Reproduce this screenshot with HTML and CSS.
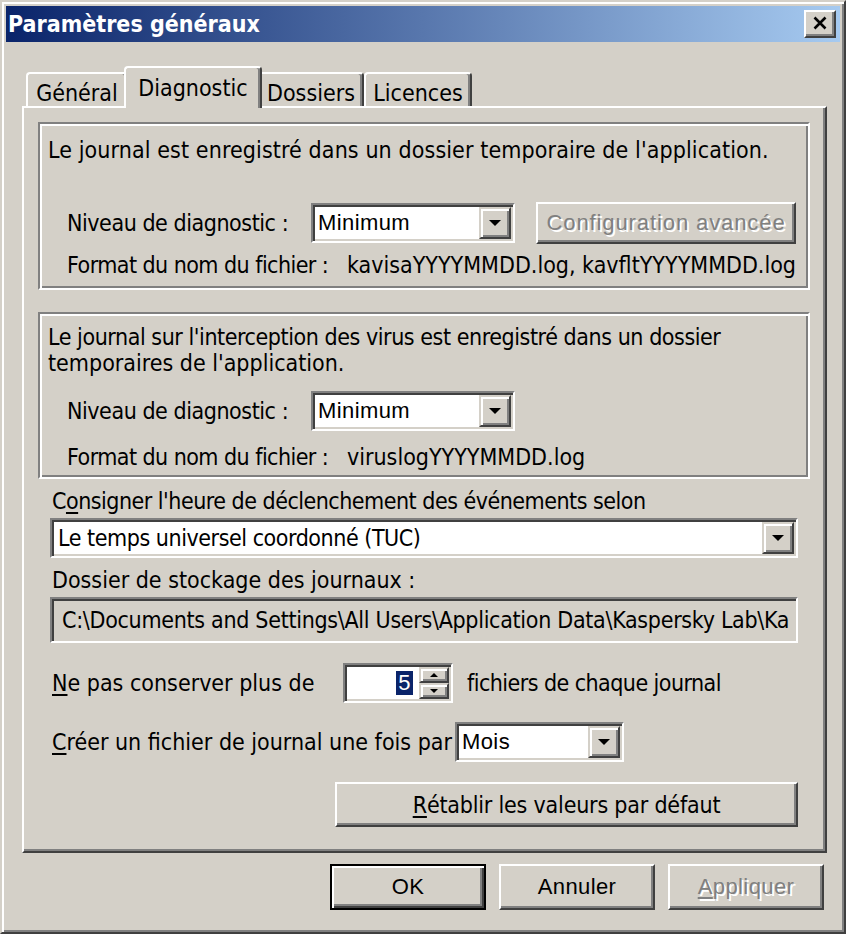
FILE: index.html
```html
<!DOCTYPE html>
<html lang="fr">
<head>
<meta charset="utf-8">
<title>Paramètres généraux</title>
<link rel="stylesheet" href="styles.css">
</head>
<body>
<div class="window">
  <div class="titlebar">
    <span class="title">Paramètres généraux</span>
    <div class="close">
      <svg width="16" height="14" viewBox="0 0 16 14"><path d="M2.5 1.5 L13.5 12.5 M13.5 1.5 L2.5 12.5" stroke="#000" stroke-width="2.6" fill="none"/></svg>
    </div>
  </div>
  <div class="client">
    <div class="tabs">
      <div class="tab t1">Général</div>
      <div class="tab t2 active">Diagnostic</div>
      <div class="tab t3">Dossiers</div>
      <div class="tab t4">Licences</div>
    </div>
    <div class="panel">
      <div class="group g1">
        <div class="line l-first">Le journal est enregistré dans un dossier temporaire de l'application.</div>
        <div class="row lvl1">
          <span class="lbl lbl-level">Niveau de diagnostic :</span>
          <div class="combo combo-level"><span class="combo-text ms">Minimum</span><span class="drop"><i class="tri"></i></span></div>
          <div class="btn btn-adv disabled ms">Configuration avancée</div>
        </div>
        <div class="row fmt1">
          <span class="lbl lbl-format">Format du nom du fichier :</span><span>kavisaYYYYMMDD.log, kavfltYYYYMMDD.log</span>
        </div>
      </div>
      <div class="group g2">
        <div class="line l-virus">Le journal sur l'interception des virus est enregistré dans un dossier</div>
        <div class="line">temporaires de l'application.</div>
        <div class="row lvl2">
          <span class="lbl lbl-level">Niveau de diagnostic :</span>
          <div class="combo combo-level"><span class="combo-text ms">Minimum</span><span class="drop"><i class="tri"></i></span></div>
        </div>
        <div class="row fmt2">
          <span class="lbl lbl-format">Format du nom du fichier :</span><span>viruslogYYYYMMDD.log</span>
        </div>
      </div>
      <div class="section">
        <div class="line l-consigner">C<u>o</u>nsigner l'heure de déclenchement des événements selon</div>
        <div class="combo combo-wide"><span class="combo-text">Le temps universel coordonné (TUC)</span><span class="drop"><i class="tri"></i></span></div>
        <div class="line l-dossier">Dossier de stockage des journaux :</div>
        <div class="edit-path">C:\Documents and Settings\All Users\Application Data\Kaspersky Lab\Ka</div>
        <div class="row r-keep">
          <span class="lbl lbl-keep"><u>N</u>e pas conserver plus de</span>
          <div class="spin">
            <span class="spin-val ms"><span class="sel">5</span></span>
            <span class="spin-btns">
              <span class="sbtn"><i class="tri-up"></i></span>
              <span class="sbtn"><i class="tri-sm"></i></span>
            </span>
          </div>
          <span class="after-spin">fichiers de chaque journal</span>
        </div>
        <div class="row r-create">
          <span class="lbl lbl-create"><u>C</u>réer un fichier de journal une fois par</span>
          <div class="combo combo-mois"><span class="combo-text ms">Mois</span><span class="drop"><i class="tri"></i></span></div>
        </div>
        <div class="btn btn-reset"><u>R</u>établir les valeurs par défaut</div>
      </div>
    </div>
    <div class="buttons">
      <div class="btn dlg default ms">OK</div>
      <div class="btn dlg ms">Annuler</div>
      <div class="btn dlg disabled ms"><u>A</u>ppliquer</div>
    </div>
  </div>
</div>
</body>
</html>
```
FILE: styles.css
```css
* { box-sizing: border-box; }

body {
  margin: 0;
  background: #D4D0C8;
  font-family: "DejaVu Sans Condensed", "DejaVu Sans", sans-serif;
  font-size: 23px;
  color: #000;
}

.ms {
  font-family: "Liberation Sans", Arial, sans-serif;
  font-size: 22px;
  letter-spacing: 0.4px;
}

u { text-decoration-thickness: 2px; text-underline-offset: 3px; }

.window {
  width: 846px;
  height: 934px;
  border: 2px solid;
  border-color: #D4D0C8 #404040 #404040 #D4D0C8;
  box-shadow: inset 2px 2px #fff, inset -2px -2px #808080;
  padding: 4px;
  display: flex;
  flex-direction: column;
}

.titlebar {
  height: 36px;
  flex: none;
  background: linear-gradient(to right, #0A246A, #A6CAF0);
  display: flex;
  align-items: center;
  justify-content: space-between;
  padding: 0 4px 0 2px;
}

.title {
  color: #fff;
  font-weight: bold;
  font-size: 23px;
  line-height: 36px;
}

.close {
  width: 32px;
  height: 28px;
  background: #D4D0C8;
  border: 2px solid;
  border-color: #fff #404040 #404040 #fff;
  box-shadow: inset -2px -2px #808080;
  display: flex;
  align-items: center;
  justify-content: center;
  padding-bottom: 2px;
}

.client {
  flex: 1;
  display: flex;
  flex-direction: column;
  padding: 0 13px 0 16px;
}

.tabs {
  display: flex;
  align-items: flex-end;
  height: 40px;
  margin-top: 24px;
  padding-left: 4px;
  position: relative;
  z-index: 2;
}

.tab {
  height: 34px;
  border: 2px solid;
  border-bottom: 0;
  border-color: #fff #404040 transparent #fff;
  box-shadow: inset -2px 0 #808080;
  border-radius: 4px 4px 0 0;
  padding-top: 6px;
  line-height: 26px;
  text-align: center;
  background: #D4D0C8;
  white-space: nowrap;
}

.t1 { width: 102px; }
.t3 { width: 106px; }
.t4 { width: 108px; }

.tab.active {
  width: 138px;
  height: 42px;
  padding-top: 7px;
  margin: 0 -4px -2px -4px;
  position: relative;
  z-index: 3;
}

.panel {
  height: 747px;
  flex: none;
  border: 2px solid;
  border-color: #fff #404040 #404040 #fff;
  box-shadow: inset -2px -2px #808080;
  padding: 14px 15px 0 14px;
  display: flex;
  flex-direction: column;
}

.group {
  border: 2px solid;
  border-color: #808080 #fff #fff #808080;
  box-shadow: inset 2px 2px #fff, inset -2px -2px #808080;
  padding-left: 8px;
  flex: none;
}

.g1 { height: 168px; padding-top: 13px; }
.g2 { height: 167px; padding-top: 10px; margin-top: 22px; }

.line { line-height: 26px; white-space: nowrap; }
.l-first { letter-spacing: 0.1px; }
.l-virus { letter-spacing: -0.44px; }

.row { display: flex; align-items: center; white-space: nowrap; }

.lvl1 { height: 42px; margin-top: 39px; padding-left: 19px; }
.fmt1 { height: 26px; margin-top: 8px; padding-left: 19px; }
.lvl2 { height: 40px; margin-top: 15px; padding-left: 19px; }
.fmt2 { height: 26px; margin-top: 13px; padding-left: 19px; }

.lbl { flex: none; }
.lbl-level { width: 244px; letter-spacing: -0.45px; }
.lbl-format { width: 280px; letter-spacing: -0.55px; }

.combo {
  display: flex;
  align-items: stretch;
  height: 40px;
  background: #fff;
  border: 2px solid;
  border-color: #808080 #fff #fff #808080;
  box-shadow: inset 2px 2px #404040, inset -2px -2px #D4D0C8;
  padding: 2px;
  flex: none;
}

.combo-text {
  flex: 1;
  display: flex;
  align-items: center;
  padding-left: 3px;
  overflow: hidden;
  white-space: nowrap;
}

.combo-level { width: 204px; }
.combo-mois { width: 169px; }

.drop {
  width: 32px;
  flex: none;
  background: #D4D0C8;
  border: 2px solid;
  border-color: #D4D0C8 #404040 #404040 #D4D0C8;
  box-shadow: inset 2px 2px #fff, inset -2px -2px #808080;
  display: flex;
  align-items: center;
  justify-content: center;
}

.tri {
  width: 0;
  height: 0;
  border-left: 6px solid transparent;
  border-right: 6px solid transparent;
  border-top: 6px solid #000;
}

.btn {
  display: flex;
  align-items: center;
  justify-content: center;
  background: #D4D0C8;
  border: 2px solid;
  border-color: #fff #404040 #404040 #fff;
  box-shadow: inset -2px -2px #808080;
  white-space: nowrap;
  flex: none;
}

.disabled { color: #808080; text-shadow: 2px 2px 0 #fff; }

.btn-adv { width: 260px; height: 42px; margin-left: 21px; letter-spacing: 0.9px; }

.section {
  display: flex;
  flex-direction: column;
  padding: 0 12px;
}

.l-consigner { margin-top: 9px; padding-left: 2px; letter-spacing: -0.5px; }
.combo-wide { margin-top: 4px; }
.combo-wide .combo-text { padding-left: 4px; letter-spacing: -0.45px; }
.l-dossier { margin-top: 9px; padding-left: 2px; }

.edit-path {
  margin-top: 4px;
  height: 46px;
  border: 2px solid;
  border-color: #808080 #fff #fff #808080;
  box-shadow: inset 2px 2px #404040, inset -2px -2px #D4D0C8;
  padding: 0 4px 0 10px;
  display: flex;
  align-items: center;
  overflow: hidden;
  white-space: nowrap;
  letter-spacing: -0.3px;
}

.r-keep { height: 40px; margin-top: 20px; }
.lbl-keep { width: 293px; padding-left: 2px; }

.spin {
  width: 110px;
  height: 40px;
  flex: none;
  display: flex;
  background: #fff;
  border: 2px solid;
  border-color: #808080 #fff #fff #808080;
  box-shadow: inset 2px 2px #404040, inset -2px -2px #D4D0C8;
  padding: 2px;
}

.spin-val {
  flex: 1;
  display: flex;
  align-items: center;
  justify-content: flex-end;
  padding-right: 6px;
}

.sel {
  background: #0A246A;
  color: #fff;
  line-height: 24px;
  padding: 0 2px;
}

.spin-btns {
  width: 30px;
  display: flex;
  flex-direction: column;
}

.sbtn {
  flex: 1;
  background: #D4D0C8;
  border: 2px solid;
  border-color: #D4D0C8 #404040 #404040 #D4D0C8;
  box-shadow: inset 2px 2px #fff, inset -2px -2px #808080;
  display: flex;
  align-items: center;
  justify-content: center;
}

.tri-sm, .tri-up {
  width: 0;
  height: 0;
  border-left: 4px solid transparent;
  border-right: 4px solid transparent;
}
.tri-sm { border-top: 4px solid #000; }
.tri-up { border-bottom: 4px solid #000; }

.after-spin { margin-left: 14px; letter-spacing: -0.55px; }

.r-create { height: 40px; margin-top: 19px; }
.lbl-create { width: 405px; padding-left: 2px; }

.btn-reset {
  align-self: flex-end;
  width: 463px;
  height: 45px;
  margin-top: 20px;
  letter-spacing: -0.2px;
}

.buttons {
  display: flex;
  justify-content: flex-end;
  gap: 13px;
  margin-top: 11px;
  padding-right: 3px;
}

.dlg { width: 156px; height: 46px; }

.btn.default {
  border-color: #000;
  box-shadow: inset 2px 2px #fff, inset -2px -2px #404040, inset -4px -4px #808080;
}
```
